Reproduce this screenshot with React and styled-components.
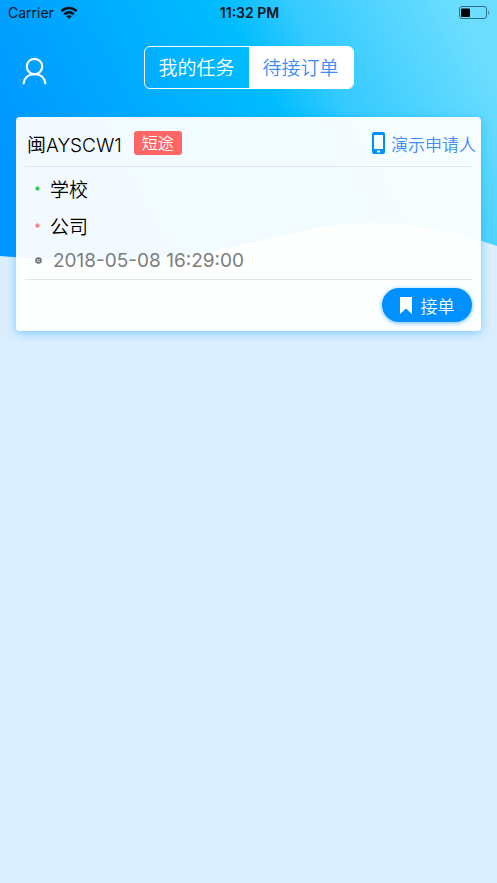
import { useState } from "react";
import styled, { createGlobalStyle } from "styled-components";

const color = {
  blue: "#0090ff",
  link: "#3d8ef0",
  red: "#ff6666",
  green: "#1fc43c",
  pink: "#ff6b7d",
  gray: "#7d7d7d",
  line: "#dfe5eb",
  page: "#dbeefe",
};

const App = () => {
  const [tab, setTab] = useState("orders");

  return (
    <Page>
      <GlobalStyle />
      <Wave viewBox="0 0 497 262" preserveAspectRatio="none" aria-hidden="true">
        <defs>
          <linearGradient
            id="sky"
            gradientUnits="userSpaceOnUse"
            x1="20"
            y1="200"
            x2="440"
            y2="-20"
          >
            <stop offset="0" stopColor="#0095ff" />
            <stop offset="0.57" stopColor="#00bdff" />
            <stop offset="0.7" stopColor="#35caff" />
            <stop offset="1" stopColor="#6bddff" />
          </linearGradient>
        </defs>
        <path
          d="M0 0H497V246C455 231 412 223 370 223C290 223 235 260 110 260C70 260 35 259 0 256Z"
          fill="url(#sky)"
        />
      </Wave>

      <StatusBar>
        <Carrier>
          Carrier
          <WifiIcon />
        </Carrier>
        <Clock>11:32 PM</Clock>
        <BatteryIcon />
      </StatusBar>

      <Nav>
        <ProfileButton type="button" aria-label="个人中心">
          <UserIcon />
        </ProfileButton>
        <Tabs>
          <Tab type="button" $active={tab === "tasks"} onClick={() => setTab("tasks")}>
            我的任务
          </Tab>
          <Tab type="button" $active={tab === "orders"} onClick={() => setTab("orders")}>
            待接订单
          </Tab>
        </Tabs>
      </Nav>

      <Card>
        <CardHead>
          <Plate>闽AYSCW1</Plate>
          <Tag>短途</Tag>
          <Contact href="#contact">
            <PhoneIcon />
            演示申请人
          </Contact>
        </CardHead>
        <CardBody>
          <Place>
            <Dot $color={color.green} />
            学校
          </Place>
          <Place>
            <Dot $color={color.pink} />
            公司
          </Place>
          <Time>
            <ClockIcon />
            2018-05-08 16:29:00
          </Time>
        </CardBody>
        <CardFoot>
          <AcceptButton type="button">
            <BookmarkIcon />
            接单
          </AcceptButton>
        </CardFoot>
      </Card>
    </Page>
  );
};

const WifiIcon = () => (
  <svg width="18" height="14" viewBox="0 0 18 14" aria-hidden="true">
    <g fill="none" stroke="#06141c" strokeWidth="2.6">
      <path d="M1.4 5.2C5.6 1 12.4 1 16.6 5.2" />
      <path d="M4.3 8.3C6.9 5.7 11.1 5.7 13.7 8.3" />
    </g>
    <path d="M6.3 10.3C7.8 8.9 10.2 8.9 11.7 10.3L9 13Z" fill="#06141c" />
  </svg>
);

const BatteryIcon = () => (
  <svg width="32" height="14" viewBox="0 0 32 14" aria-hidden="true">
    <rect x="0.5" y="0.5" width="27" height="12" rx="2.5" fill="none" stroke="#2e6f84" />
    <rect x="2" y="2.5" width="9" height="8.5" rx="1" fill="#000" />
    <path d="M29.3 4.5C30.6 5 30.6 8.3 29.3 8.8Z" fill="#2e6f84" />
  </svg>
);

const UserIcon = () => (
  <svg width="26" height="28" viewBox="0 0 26 28" aria-hidden="true">
    <g fill="none" stroke="#fff" strokeWidth="2.2" strokeLinecap="round">
      <circle cx="12.5" cy="9.5" r="7.7" />
      <path d="M1.6 26.4C2.4 20.8 6.6 17.2 12.5 17.2C18.4 17.2 22.6 20.8 23.4 26.4" />
    </g>
  </svg>
);

const PhoneIcon = () => (
  <svg width="13" height="22" viewBox="0 0 13 22" aria-hidden="true">
    <path
      fillRule="evenodd"
      fill={color.blue}
      d="M2 0H11A2 2 0 0 1 13 2V20A2 2 0 0 1 11 22H2A2 2 0 0 1 0 20V2A2 2 0 0 1 2 0ZM2 3V17H11V3ZM5 18.5V20.5H8V18.5Z"
    />
  </svg>
);

const ClockIcon = () => (
  <svg width="7" height="7" viewBox="0 0 7 7" aria-hidden="true">
    <circle cx="3.5" cy="3.5" r="2.5" fill="#cfcfcf" stroke="#6f7276" strokeWidth="1.6" />
    <path d="M3.5 2V3.8H4.8" fill="none" stroke="#6f7276" strokeWidth="0.8" />
  </svg>
);

const BookmarkIcon = () => (
  <svg width="12" height="17" viewBox="0 0 12 17" aria-hidden="true">
    <path d="M0 0H12V17L6 11.5L0 17Z" fill="#fff" />
  </svg>
);

const GlobalStyle = createGlobalStyle`
  * {
    box-sizing: border-box;
  }
  body {
    margin: 0;
    background: ${color.page};
    font-family: Inter, "Noto Sans CJK SC", sans-serif;
  }
  button {
    font-family: inherit;
    cursor: pointer;
  }
`;

const Page = styled.div`
  position: relative;
  min-height: 100vh;
  background: ${color.page};
`;

const Wave = styled.svg`
  position: absolute;
  top: 0;
  left: 0;
  width: 100%;
  height: 262px;
`;

const StatusBar = styled.div`
  position: relative;
  display: grid;
  grid-template-columns: 1fr auto 1fr;
  align-items: center;
  height: 25px;
  padding: 0 6px 0 8px;
  color: #06141c;
  font-size: 14px;

  > :last-child {
    justify-self: end;
  }
`;

const Carrier = styled.span`
  display: flex;
  align-items: center;
  gap: 6px;
`;

const Clock = styled.span`
  font-weight: 600;
`;

const Nav = styled.header`
  position: relative;
  display: grid;
  grid-template-columns: 1fr auto 1fr;
  align-items: center;
  height: 84px;
  padding: 0 16px;
`;

const ProfileButton = styled.button`
  display: flex;
  justify-self: start;
  padding: 8px 6px 0;
  border: 0;
  background: none;
`;

const Tabs = styled.div`
  display: flex;
  height: 43px;
  border: 1px solid #fff;
  border-radius: 6px;
  overflow: hidden;
`;

const Tab = styled.button`
  width: 104px;
  padding: 0 0 2px;
  border: 0;
  background: ${({ $active }) => ($active ? "#fff" : "transparent")};
  color: ${({ $active }) => ($active ? color.link : "#fff")};
  font-size: 19px;
  font-weight: 350;
`;

const Card = styled.article`
  position: relative;
  margin: 8px 16px;
  padding: 0 9px;
  border-radius: 4px;
  background: rgba(255, 255, 255, 0.95);
  box-shadow: 0 2px 10px rgba(0, 160, 255, 0.45);
`;

const CardHead = styled.div`
  display: flex;
  align-items: center;
  height: 50px;
  padding: 3px 0 0 2px;
  border-bottom: 1px solid ${color.line};
`;

const Plate = styled.span`
  font-size: 19px;
  font-weight: 350;
`;

const Tag = styled.span`
  margin-left: 12px;
  padding: 0 8px;
  border-radius: 3px;
  background: ${color.red};
  color: #fff;
  font-size: 16px;
  font-weight: 350;
  line-height: 24px;
`;

const Contact = styled.a`
  display: flex;
  align-items: center;
  gap: 6px;
  margin-left: auto;
  margin-right: -4px;
  color: ${color.link};
  font-size: 17px;
  font-weight: 350;
  text-decoration: none;
`;

const CardBody = styled.div`
  padding: 3px 10px;
  border-bottom: 1px solid ${color.line};
`;

const Place = styled.div`
  display: flex;
  align-items: center;
  gap: 10px;
  height: 37px;
  font-size: 19px;
  font-weight: 350;
`;

const Dot = styled.i`
  width: 5px;
  height: 5px;
  border: 1px solid #fff8;
  border-radius: 50%;
  background: ${({ $color }) => $color};
`;

const Time = styled.div`
  display: flex;
  align-items: center;
  gap: 11px;
  height: 32px;
  color: ${color.gray};
  font-size: 19px;
`;

const CardFoot = styled.div`
  display: flex;
  align-items: center;
  justify-content: flex-end;
  height: 51px;
  padding-bottom: 1px;
`;

const AcceptButton = styled.button`
  display: flex;
  align-items: center;
  justify-content: center;
  gap: 9px;
  width: 90px;
  height: 34px;
  padding: 0;
  border: 0;
  border-radius: 17px;
  background: ${color.blue};
  box-shadow: 0 1px 4px rgba(0, 144, 255, 0.6);
  color: #fff;
  font-size: 17px;
  font-weight: 350;
`;

export default App;
